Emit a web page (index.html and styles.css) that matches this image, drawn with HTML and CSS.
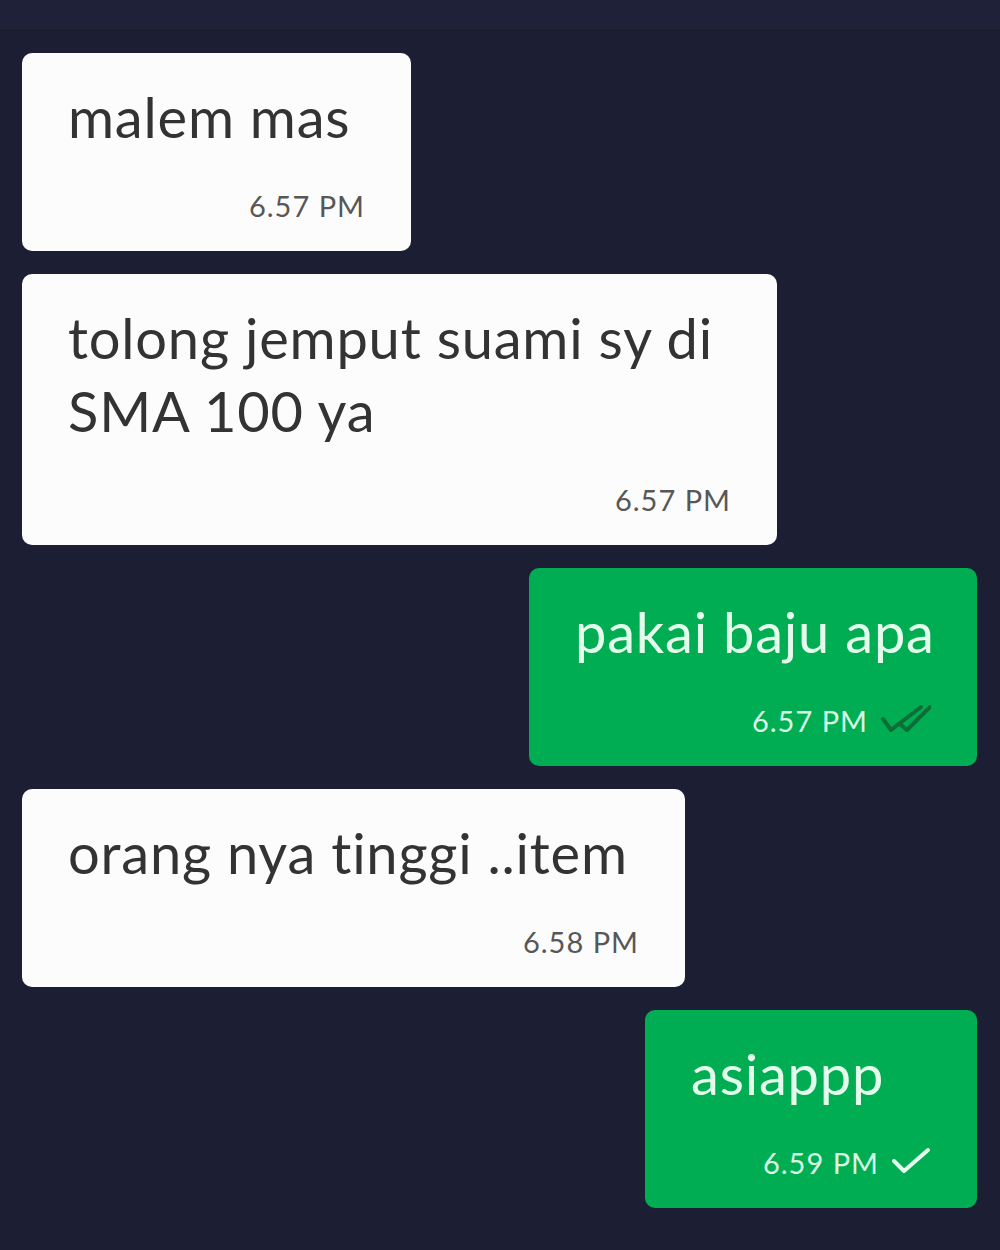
FILE: index.html
```html
<!DOCTYPE html>
<html lang="id">
<head>
<meta charset="utf-8">
<title>Chat</title>
<link rel="stylesheet" href="styles.css">
</head>
<body>
<div class="topbar"></div>
<main class="chat">
  <div class="bubble in w1">
    <p class="msg">malem mas</p>
    <div class="meta"><span class="time">6.57 PM</span></div>
  </div>
  <div class="bubble in w2">
    <p class="msg two-line">tolong jemput suami sy di SMA 100 ya</p>
    <div class="meta"><span class="time">6.57 PM</span></div>
  </div>
  <div class="bubble out w3">
    <p class="msg">pakai baju apa</p>
    <div class="meta"><span class="time">6.57 PM</span><svg class="tick double" width="50" height="30" viewBox="0 0 50 30"><path d="M2 17 L10 28 L40 5" /><path d="M19 22 L26 28 L49 5" /></svg></div>
  </div>
  <div class="bubble in w4">
    <p class="msg">orang nya tinggi ..item</p>
    <div class="meta"><span class="time">6.58 PM</span></div>
  </div>
  <div class="bubble out w5">
    <p class="msg">asiappp</p>
    <div class="meta"><span class="time">6.59 PM</span><svg class="tick single" width="40" height="28" viewBox="0 0 40 28"><path d="M3 15 L13 25 L37 4" /></svg></div>
  </div>
</main>
</body>
</html>
```
FILE: styles.css
```css
html, body {
  margin: 0;
  padding: 0;
}
body {
  background: #1c1f33;
  font-family: Lato, "Noto Sans", sans-serif;
  width: 1000px;
  height: 1250px;
  overflow: hidden;
}
.topbar {
  height: 30px;
  background: #1e2137;
  border-bottom: 1px solid #171a2b;
}
.chat {
  display: flex;
  flex-direction: column;
  gap: 23px;
  padding: 22px 23px 0 22px;
}
.bubble {
  box-sizing: border-box;
  border-radius: 10px;
  padding: 27px 46px 25px 46px;
}
.bubble.in {
  align-self: flex-start;
  background: #fcfcfd;
  color: #333333;
}
.bubble.out {
  align-self: flex-end;
  background: #00ad52;
  color: #e4fceb;
}
.w1 { width: 389px; }
.w2 { width: 755px; }
.w3 { width: 448px; }
.w4 { width: 663px; }
.w5 { width: 332px; }
.msg {
  margin: 0 -20px 0 0;
  font-size: 56px;
  letter-spacing: 0.8px;
  line-height: 73px;
}
.msg.two-line {
  margin-bottom: 1px;
}
.meta {
  margin-top: 33px;
  display: flex;
  justify-content: flex-end;
  align-items: baseline;
  line-height: 40px;
  font-size: 29px;
  letter-spacing: 1px;
}
.in .time { color: #575757; }
.out .time { color: #d8fbe4; }
.tick {
  margin-left: 13px;
  fill: none;
  stroke-width: 4;
  stroke-linecap: round;
  stroke-linejoin: round;
}
.tick.double { stroke: #0a6e36; }
.tick.single { stroke: #e8fff0; margin-left: 12px; }
```
